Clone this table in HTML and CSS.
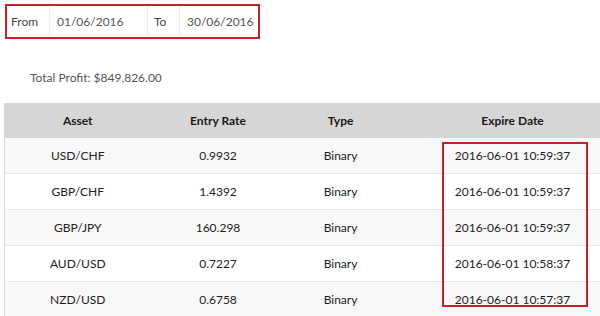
FILE: index.html
```html
<!DOCTYPE html>
<html>
<head>
<meta charset="utf-8">
<link rel="stylesheet" href="styles.css">
</head>
<body>
<div class="page">
  <div class="range">
    <div class="lbl lbl-from">From</div>
    <div class="inp inp-from">01/06/2016</div>
    <div class="lbl lbl-to">To</div>
    <div class="inp inp-to">30/06/2016</div>
  </div>
  <div class="total">Total Profit: $849,826.00</div>
  <div class="table-wrap">
    <table class="grid">
      <colgroup>
        <col class="c1"><col class="c2"><col class="c3"><col class="c4">
      </colgroup>
      <thead>
        <tr><th>Asset</th><th>Entry Rate</th><th>Type</th><th>Expire Date</th></tr>
      </thead>
      <tbody>
        <tr><td>USD/CHF</td><td>0.9932</td><td>Binary</td><td>2016-06-01 10:59:37</td></tr>
        <tr><td>GBP/CHF</td><td>1.4392</td><td>Binary</td><td>2016-06-01 10:59:37</td></tr>
        <tr><td>GBP/JPY</td><td>160.298</td><td>Binary</td><td>2016-06-01 10:59:37</td></tr>
        <tr><td>AUD/USD</td><td>0.7227</td><td>Binary</td><td>2016-06-01 10:58:37</td></tr>
        <tr><td>NZD/USD</td><td>0.6758</td><td>Binary</td><td>2016-06-01 10:57:37</td></tr>
      </tbody>
    </table>
    <div class="highlight"></div>
  </div>
</div>
</body>
</html>
```
FILE: styles.css
```css
html, body {
  margin: 0;
  padding: 0;
  background: #fff;
  overflow: hidden;
  width: 600px;
  height: 316px;
}
.page {
  font-family: Lato, "Open Sans", sans-serif;
  color: #222;
  padding: 4px 0 0 5px;
}
.range {
  display: flex;
  width: 251px;
  height: 31px;
  border: 2px solid #c8202b;
  background: #fff;
  font-size: 12px;
  color: #444;
}
.range > div {
  display: flex;
  align-items: center;
  border-right: 1px solid #ececec;
}
.lbl-from { width: 43px; padding-left: 4px; box-sizing: border-box; }
.inp-from { width: 98px; padding-left: 7px; box-sizing: border-box; color: #555; }
.lbl-to { width: 32px; padding-left: 6px; box-sizing: border-box; }
.inp-to { flex: 1; padding-left: 7px; box-sizing: border-box; color: #555; border-right: none !important; }
.total {
  margin: 32px 0 0 25px;
  font-size: 12px;
  color: #555;
  height: 14px;
  line-height: 14px;
}
.table-wrap {
  position: relative;
  margin-top: 18px;
  margin-left: -1px;
  width: 625px;
}
.grid {
  border-collapse: collapse;
  width: 625px;
  table-layout: fixed;
  font-size: 12px;
  border-left: 1px solid #d8d8d8;
}
.c1 { width: 146px; }
.c2 { width: 135px; }
.c3 { width: 110px; }
.c4 { width: 234px; }
.grid th {
  background: #d6d6d6;
  height: 35px;
  font-weight: 700;
  color: #1a1a1a;
  text-align: center;
  padding: 0;
}
.grid td {
  height: 35px;
  text-align: center;
  padding: 0;
  border-bottom: 1px solid #e6e6e6;
  color: #222;
}
.grid tbody tr:nth-child(odd) { background: #f8f8f8; }
.grid tbody tr:nth-child(even) { background: #fff; }
.highlight {
  position: absolute;
  left: 438px;
  top: 39px;
  width: 142px;
  height: 161px;
  border: 2px solid #c8202b;
  pointer-events: none;
}
```
